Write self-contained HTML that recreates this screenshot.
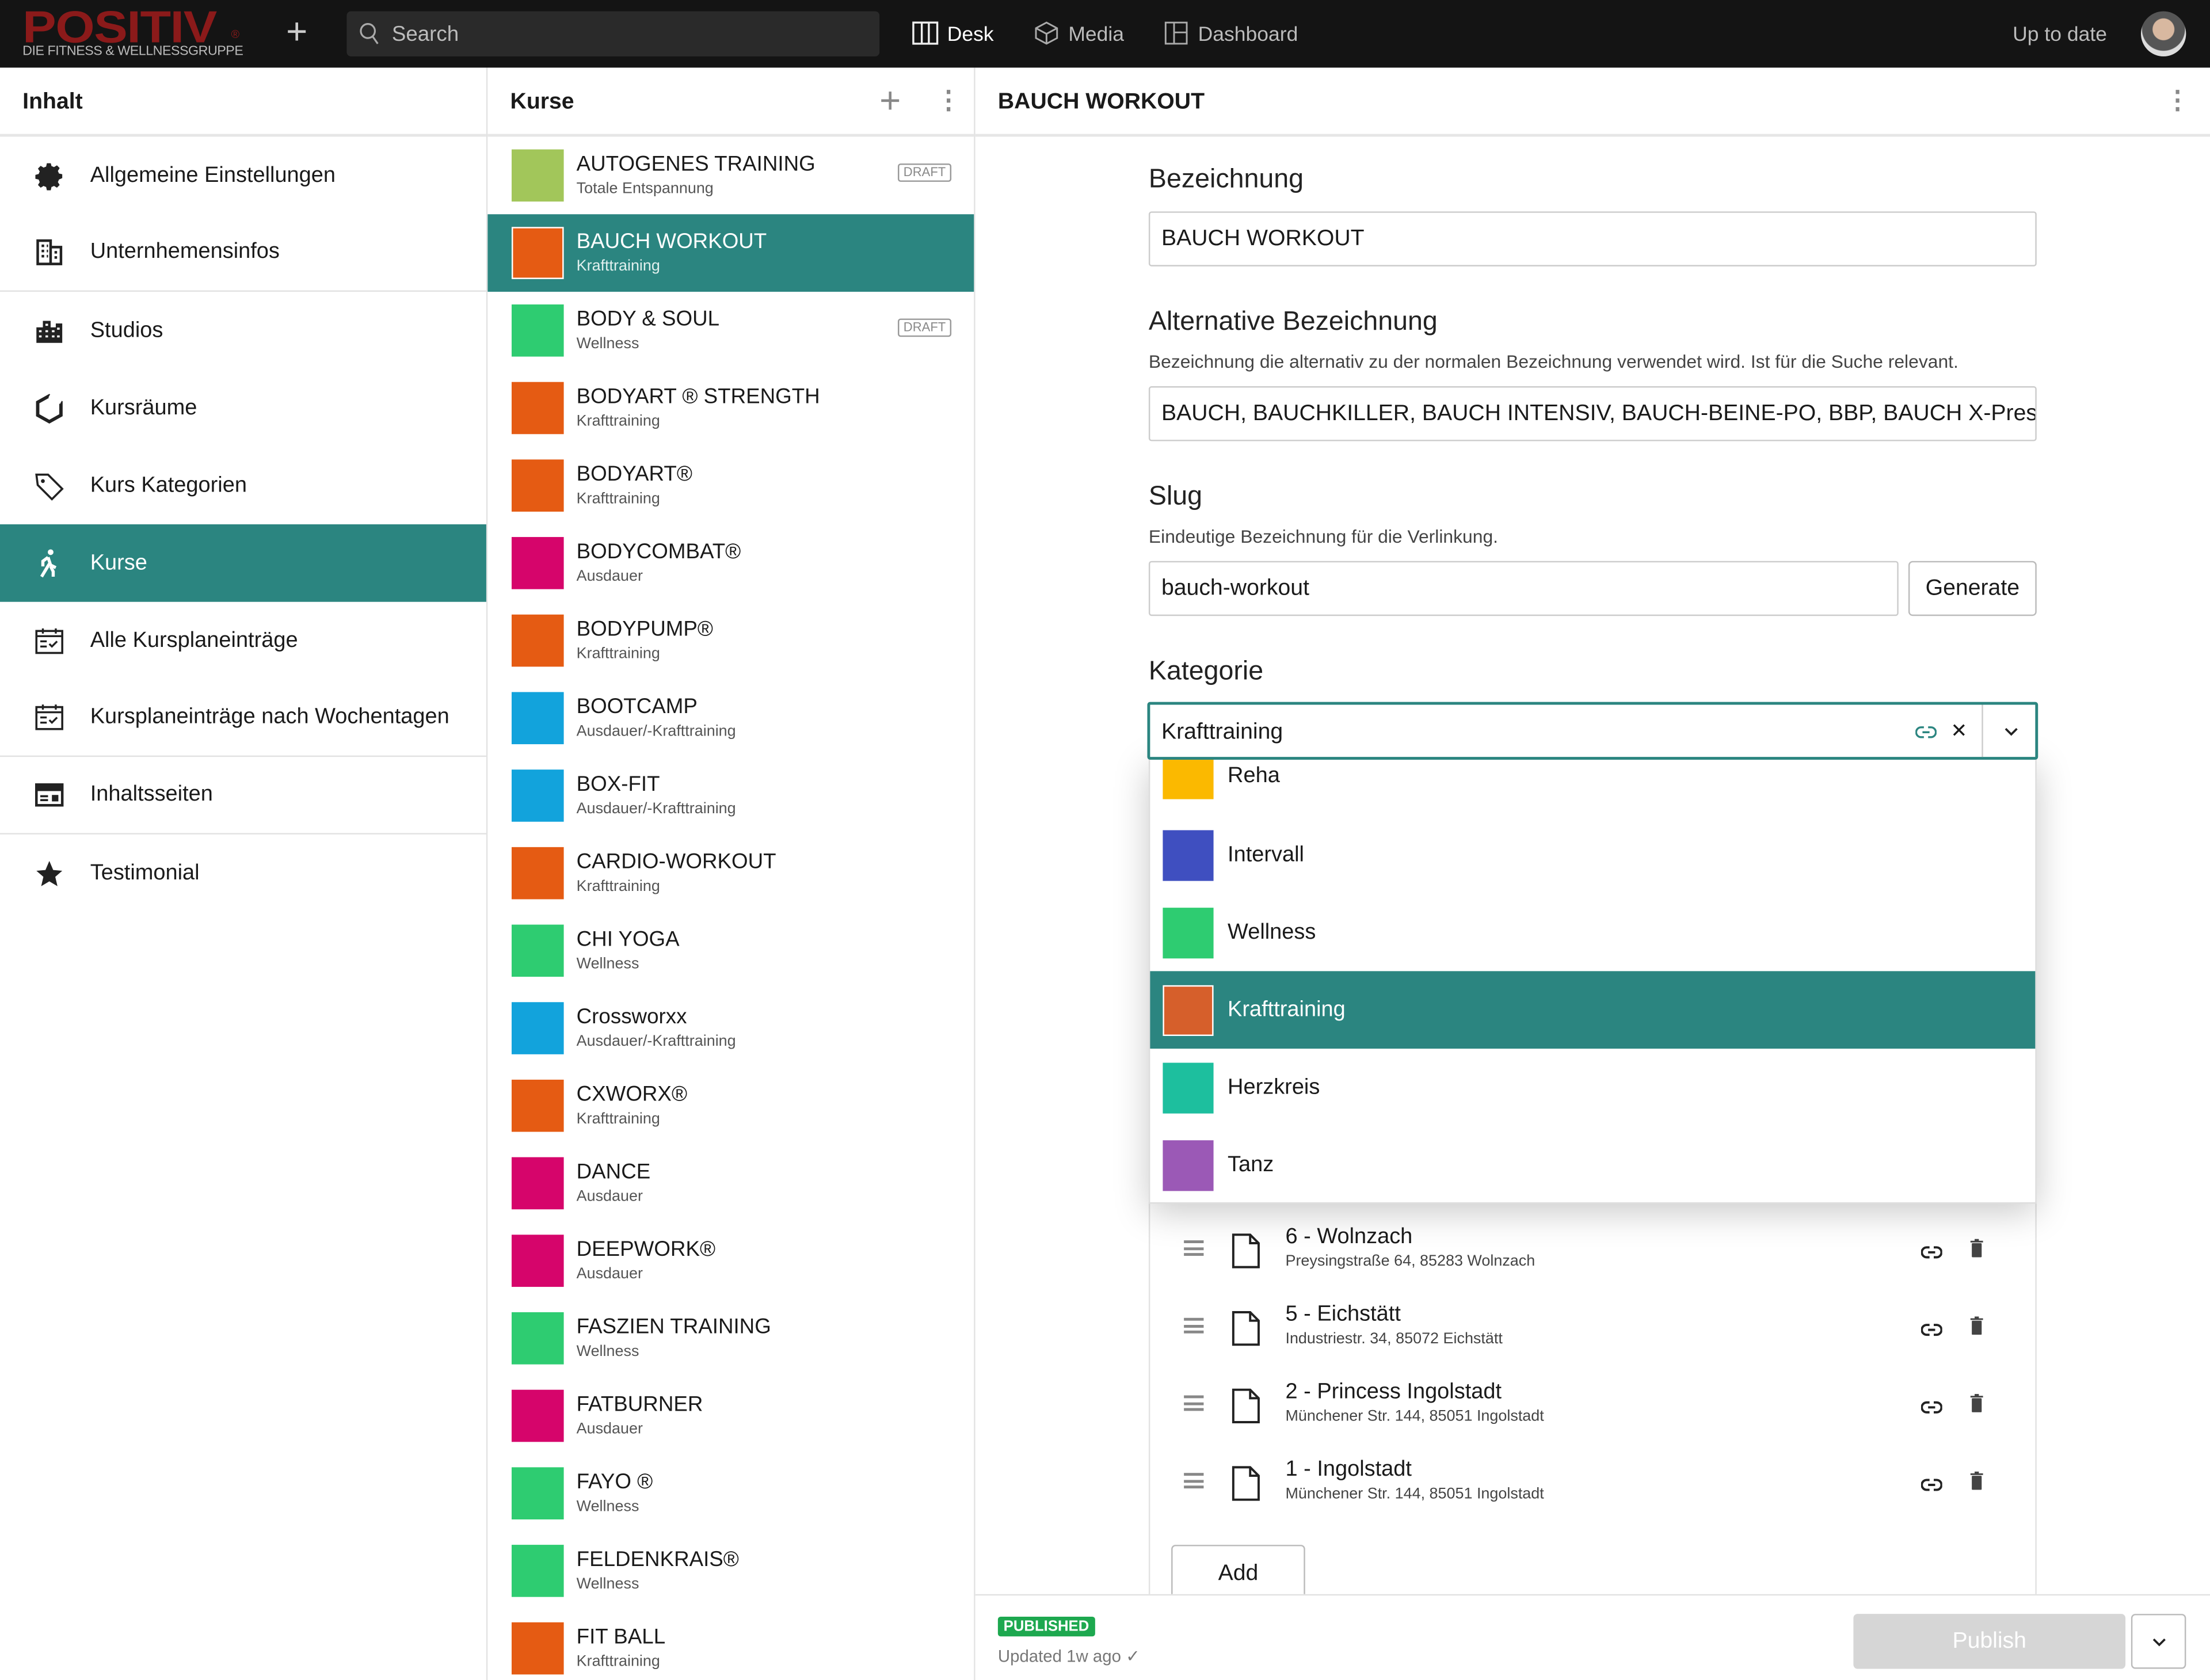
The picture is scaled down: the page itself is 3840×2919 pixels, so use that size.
<!DOCTYPE html>
<html><head><meta charset="utf-8">
<style>
*{box-sizing:border-box;margin:0;padding:0}
html,body{width:3840px;height:2919px;overflow:hidden;background:#fff}
#w{width:1568px;height:1192px;transform:scale(2.44898);transform-origin:0 0;position:relative;font-family:"Liberation Sans",sans-serif;color:#1a1a1a;overflow:hidden}
.top{position:absolute;left:0;top:0;width:1568px;height:48px;background:#141414;color:#ccc}
.abs{position:absolute}
.col{position:absolute;top:48px;bottom:0;border-right:1px solid #e2e2e2;background:#fff}
.hdr{height:49px;border-bottom:2px solid #e6e6e6;font-weight:bold;font-size:16px;padding:16px 16px;color:#1a1a1a}
.li{height:55px;display:flex;align-items:center;padding-left:24px;font-size:15.5px;position:relative}
.li svg{width:22px;height:22px;margin-right:18px}
.sep{border-bottom:1px solid #e2e2e2}
.sel{background:#2b8580;color:#fff}
.ci{height:55px;display:flex;align-items:center;padding-left:17px;position:relative}
.sw{width:37px;height:37px;margin-right:9px}
.ci .t{font-size:15px;line-height:18px}
.ci .s{font-size:11px;color:#555;line-height:16px}
.sel .s{color:#e0f0ee}
.dr{position:absolute;right:16px;top:19px;font-size:9px;color:#888;border:1px solid #999;border-radius:2px;padding:0 3px;line-height:11px}
.lbl{position:absolute;left:815px;font-size:19px;color:#222}
.inp{position:absolute;left:815px;width:630px;height:39px;border:1px solid #ccc;border-radius:2px;font-size:16px;padding:10px 8px;white-space:nowrap;overflow:hidden}
.help{position:absolute;left:815px;font-size:13px;color:#444}
.opt{height:55px;display:flex;align-items:center;padding-left:9px;font-size:15.5px}
.opt .sw{width:36px;height:36px;margin-right:10px}
.loc{position:absolute;left:830px;width:600px;height:55px}
</style></head><body><div id="w">
<div class="top">
 <div class="abs" style="left:16px;top:2px;font-size:32px;font-weight:bold;color:#8b1a1a;letter-spacing:-0.5px;transform:scaleX(1.12);transform-origin:0 0;line-height:34px">POSITIV</div>
 <div class="abs" style="left:164px;top:20px;font-size:8px;color:#8b1a1a">®</div>
 <div class="abs" style="left:16px;top:31px;font-size:9.5px;color:#bbb;letter-spacing:-0.2px">DIE FITNESS &amp; WELLNESSGRUPPE</div>
 <div class="abs" style="left:203px;top:7px;font-size:26px;font-weight:200;color:#ccc">+</div>
 <div class="abs" style="left:246px;top:8px;width:378px;height:32px;background:#2a2a2a;border-radius:3px"></div>
 <svg class="abs" style="left:255px;top:16px" width="15" height="16" viewBox="0 0 15 16"><circle cx="6" cy="6" r="5" fill="none" stroke="#aaa" stroke-width="1.3"/><line x1="9.5" y1="10" x2="13" y2="15" stroke="#aaa" stroke-width="1.3"/></svg>
 <div class="abs" style="left:278px;top:16px;font-size:15px;color:#bbb">Search</div>
 <svg class="abs" style="left:647px;top:15px" width="19" height="17"><rect x="1" y="1" width="17" height="15" fill="none" stroke="#eee" stroke-width="1.4"/><line x1="7" y1="1" x2="7" y2="16" stroke="#eee" stroke-width="1.4"/><line x1="12" y1="1" x2="12" y2="16" stroke="#eee" stroke-width="1.4"/></svg>
 <div class="abs" style="left:672px;top:17px;font-size:14.5px;color:#fff">Desk</div>
 <svg class="abs" style="left:734px;top:15px" width="17" height="17" viewBox="0 0 17 17"><path d="M8.5 1L16 5v7l-7.5 4L1 12V5z M1 5l7.5 4L16 5 M8.5 9v7" fill="none" stroke="#aaa" stroke-width="1.2"/></svg>
 <div class="abs" style="left:758px;top:17px;font-size:14.5px;color:#bbb">Media</div>
 <svg class="abs" style="left:826px;top:15px" width="17" height="17"><rect x="1" y="1" width="15" height="15" fill="none" stroke="#aaa" stroke-width="1.2"/><line x1="7" y1="1" x2="7" y2="16" stroke="#aaa" stroke-width="1.2"/><line x1="7" y1="8" x2="16" y2="8" stroke="#aaa" stroke-width="1.2"/></svg>
 <div class="abs" style="left:850px;top:17px;font-size:14.5px;color:#bbb">Dashboard</div>
 <div class="abs" style="left:1428px;top:17px;font-size:14.5px;color:#bbb">Up to date</div>
 <div class="abs" style="left:1519px;top:8px;width:32px;height:32px;border-radius:50%;background:radial-gradient(circle at 50% 40%,#d8b8a0 0 30%,#555 32% 60%,#ddd 62%)"></div>
</div>

<div class="col" style="left:0;width:346px">
 <div class="hdr">Inhalt</div>
 <div class="li"><svg viewBox="0 0 24 24"><path d="M12 8a4 4 0 100 8 4 4 0 000-8zm9 5.5v-3l-2.6-.6a7 7 0 00-.8-1.9l1.4-2.3-2.1-2.1-2.3 1.4a7 7 0 00-1.9-.8L12.1 2h-3l-.6 2.6a7 7 0 00-1.9.8L4.3 4 2.2 6.1l1.4 2.3a7 7 0 00-.8 1.9L.2 11v3l2.6.6c.2.7.4 1.3.8 1.9l-1.4 2.3 2.1 2.1 2.3-1.4c.6.4 1.200.6 1.9.8l.6 2.6h3l.6-2.6c.7-.2 1.3-.4 1.9-.8l2.3 1.4 2.1-2.1-1.4-2.3c.4-.6.6-1.2.8-1.9z" fill="#222" transform="translate(1 0)"/></svg>Allgemeine Einstellungen</div>
 <div class="li sep"><svg viewBox="0 0 24 24"><path d="M3 3h10v18H3zM13 8h8v13h-8" fill="none" stroke="#222" stroke-width="2"/><path d="M6 7h2M10 7h1M6 11h2M10 11h1M6 15h2M10 15h1M16 12h2M16 16h2" stroke="#222" stroke-width="2"/></svg>Unternhemensinfos</div>
 <div class="li"><svg viewBox="0 0 24 24"><path d="M2 21V9h5V4h6v5h4v-3h5v15z" fill="#222"/><path d="M9 7h2M4 12h2M9 12h2M4 16h2M9 16h2M14 12h2M18 10h2M14 16h2M18 16h2" stroke="#fff" stroke-width="1.6"/></svg>Studios</div>
 <div class="li"><svg viewBox="0 0 24 24"><path d="M12 2l9 5v10l-9 5-9-5V7z" fill="none" stroke="#222" stroke-width="2.6"/><path d="M12 2l9 5" stroke="#fff" stroke-width="3"/></svg>Kursräume</div>
 <div class="li"><svg viewBox="0 0 24 24"><path d="M2 3h9l11 11-8 8L3 11z" fill="none" stroke="#222" stroke-width="1.6"/><circle cx="7" cy="8" r="1.5" fill="#222"/></svg>Kurs Kategorien</div>
 <div class="li sel"><svg viewBox="0 0 24 24"><circle cx="13" cy="3" r="2.2" fill="#fff"/><path d="M11 7l-4 3v4M11 7l2 6 4 2M12 12l-3 5-3 5M13 14l2 4 0 4" fill="none" stroke="#fff" stroke-width="2.4"/></svg>Kurse</div>
 <div class="li"><svg viewBox="0 0 24 24"><rect x="2" y="4" width="20" height="17" fill="none" stroke="#222" stroke-width="1.6"/><path d="M2 8h20M7 2v4M17 2v4M5 12h5M5 16h5M12 14l2 2 4-4" fill="none" stroke="#222" stroke-width="1.5"/></svg>Alle Kursplaneinträge</div>
 <div class="li sep"><svg viewBox="0 0 24 24"><rect x="2" y="4" width="20" height="17" fill="none" stroke="#222" stroke-width="1.6"/><path d="M2 8h20M7 2v4M17 2v4M5 12h5M5 16h5M12 14l2 2 4-4" fill="none" stroke="#222" stroke-width="1.5"/></svg>Kursplaneinträge nach Wochentagen</div>
 <div class="li sep"><svg viewBox="0 0 24 24"><rect x="2" y="4" width="20" height="16" fill="none" stroke="#222" stroke-width="2"/><rect x="2" y="4" width="20" height="5" fill="#222"/><path d="M5 13h6M5 16h6" stroke="#222" stroke-width="1.6"/><rect x="14" y="12" width="5" height="5" fill="#222"/></svg>Inhaltsseiten</div>
 <div class="li"><svg viewBox="0 0 24 24"><path d="M12 2l3 7 7 .6-5.4 4.7 1.7 7.2L12 17.8 5.7 21.5l1.7-7.2L2 9.6 9 9z" fill="#222"/></svg>Testimonial</div>
</div>

<div class="col" style="left:346px;width:346px">
 <div class="hdr">Kurse<span class="abs" style="left:278px;top:8px;font-size:26px;font-weight:200;color:#888">+</span><span class="abs" style="left:318px;top:13px;font-size:18px;color:#888;font-weight:bold">⋮</span></div>
 <div class="ci"><div class="sw" style="background:#a2c65a"></div><div><div class="t">AUTOGENES TRAINING</div><div class="s">Totale Entspannung</div></div><span class="dr">DRAFT</span></div>
 <div class="ci sel"><div class="sw" style="background:#e55b13;border:1px solid #fff"></div><div><div class="t">BAUCH WORKOUT</div><div class="s">Krafttraining</div></div></div>
 <div class="ci"><div class="sw" style="background:#2ecc71"></div><div><div class="t">BODY &amp; SOUL</div><div class="s">Wellness</div></div><span class="dr">DRAFT</span></div>
 <div class="ci"><div class="sw" style="background:#e55b13"></div><div><div class="t">BODYART ® STRENGTH</div><div class="s">Krafttraining</div></div></div>
 <div class="ci"><div class="sw" style="background:#e55b13"></div><div><div class="t">BODYART®</div><div class="s">Krafttraining</div></div></div>
 <div class="ci"><div class="sw" style="background:#d6056b"></div><div><div class="t">BODYCOMBAT®</div><div class="s">Ausdauer</div></div></div>
 <div class="ci"><div class="sw" style="background:#e55b13"></div><div><div class="t">BODYPUMP®</div><div class="s">Krafttraining</div></div></div>
 <div class="ci"><div class="sw" style="background:#12a3dc"></div><div><div class="t">BOOTCAMP</div><div class="s">Ausdauer/-Krafttraining</div></div></div>
 <div class="ci"><div class="sw" style="background:#12a3dc"></div><div><div class="t">BOX-FIT</div><div class="s">Ausdauer/-Krafttraining</div></div></div>
 <div class="ci"><div class="sw" style="background:#e55b13"></div><div><div class="t">CARDIO-WORKOUT</div><div class="s">Krafttraining</div></div></div>
 <div class="ci"><div class="sw" style="background:#2ecc71"></div><div><div class="t">CHI YOGA</div><div class="s">Wellness</div></div></div>
 <div class="ci"><div class="sw" style="background:#12a3dc"></div><div><div class="t">Crossworxx</div><div class="s">Ausdauer/-Krafttraining</div></div></div>
 <div class="ci"><div class="sw" style="background:#e55b13"></div><div><div class="t">CXWORX®</div><div class="s">Krafttraining</div></div></div>
 <div class="ci"><div class="sw" style="background:#d6056b"></div><div><div class="t">DANCE</div><div class="s">Ausdauer</div></div></div>
 <div class="ci"><div class="sw" style="background:#d6056b"></div><div><div class="t">DEEPWORK®</div><div class="s">Ausdauer</div></div></div>
 <div class="ci"><div class="sw" style="background:#2ecc71"></div><div><div class="t">FASZIEN TRAINING</div><div class="s">Wellness</div></div></div>
 <div class="ci"><div class="sw" style="background:#d6056b"></div><div><div class="t">FATBURNER</div><div class="s">Ausdauer</div></div></div>
 <div class="ci"><div class="sw" style="background:#2ecc71"></div><div><div class="t">FAYO ®</div><div class="s">Wellness</div></div></div>
 <div class="ci"><div class="sw" style="background:#2ecc71"></div><div><div class="t">FELDENKRAIS®</div><div class="s">Wellness</div></div></div>
 <div class="ci"><div class="sw" style="background:#e55b13"></div><div><div class="t">FIT BALL</div><div class="s">Krafttraining</div></div></div>
</div>

<div class="col" style="left:692px;width:876px;border-right:none">
 <div class="hdr">BAUCH WORKOUT<span class="abs" style="left:844px;top:13px;font-size:18px;color:#888">⋮</span></div>
</div>

<div class="lbl" style="top:117px">Bezeichnung</div>
<div class="inp" style="top:150px">BAUCH WORKOUT</div>
<div class="lbl" style="top:218px">Alternative Bezeichnung</div>
<div class="help" style="top:249px">Bezeichnung die alternativ zu der normalen Bezeichnung verwendet wird. Ist für die Suche relevant.</div>
<div class="inp" style="top:274px">BAUCH, BAUCHKILLER, BAUCH INTENSIV, BAUCH-BEINE-PO, BBP, BAUCH X-Press</div>
<div class="lbl" style="top:342px">Slug</div>
<div class="help" style="top:373px">Eindeutige Bezeichnung für die Verlinkung.</div>
<div class="inp" style="top:398px;width:532px">bauch-workout</div>
<div class="abs" style="left:1354px;top:398px;width:91px;height:39px;border:1px solid #bbb;border-radius:3px;font-size:16px;text-align:center;line-height:38px">Generate</div>
<div class="lbl" style="top:466px">Kategorie</div>

<div class="abs" style="left:815px;top:498px;width:630px;height:356px;border-left:1px solid #e2e2e2;border-right:1px solid #e2e2e2"></div>
<div class="abs" style="left:815px;top:853px;width:630px;height:280px;border-left:1px solid #e2e2e2;border-right:1px solid #e2e2e2"></div>

<div class="loc" style="top:860px"><div class="abs" style="left:10px;top:20px;width:14px;height:11px;border-top:2px solid #888;border-bottom:2px solid #888"></div><div class="abs" style="left:10px;top:25px;width:14px;height:2px;background:#888"></div><svg class="abs" style="left:44px;top:15px" width="20" height="25"><path d="M1 1h12l6 6v17H1z M13 1v6h6" fill="none" stroke="#222" stroke-width="1.6"/></svg><div class="abs" style="left:82px;top:9px;font-size:15.5px">6 - Wolnzach</div><div class="abs" style="left:82px;top:29px;font-size:11px;color:#444">Preysingstraße 64, 85283 Wolnzach</div><svg class="abs" style="left:533px;top:24px" width="15" height="9" viewBox="0 0 15 9"><path d="M6 1H4a3.5 3.5 0 000 7h2M9 1h2a3.5 3.5 0 010 7H9M5 4.5h5" fill="none" stroke="#222" stroke-width="1.6"/></svg><svg class="abs" style="left:568px;top:19px" width="9" height="13"><rect x="0" y="1.3" width="9" height="1.2" fill="#444"/><rect x="3" y="0" width="3" height="1.5" fill="#444"/><rect x="1" y="3" width="7" height="10" rx="0.6" fill="#444"/></svg></div>
<div class="loc" style="top:915px"><div class="abs" style="left:10px;top:20px;width:14px;height:11px;border-top:2px solid #888;border-bottom:2px solid #888"></div><div class="abs" style="left:10px;top:25px;width:14px;height:2px;background:#888"></div><svg class="abs" style="left:44px;top:15px" width="20" height="25"><path d="M1 1h12l6 6v17H1z M13 1v6h6" fill="none" stroke="#222" stroke-width="1.6"/></svg><div class="abs" style="left:82px;top:9px;font-size:15.5px">5 - Eichstätt</div><div class="abs" style="left:82px;top:29px;font-size:11px;color:#444">Industriestr. 34, 85072 Eichstätt</div><svg class="abs" style="left:533px;top:24px" width="15" height="9" viewBox="0 0 15 9"><path d="M6 1H4a3.5 3.5 0 000 7h2M9 1h2a3.5 3.5 0 010 7H9M5 4.5h5" fill="none" stroke="#222" stroke-width="1.6"/></svg><svg class="abs" style="left:568px;top:19px" width="9" height="13"><rect x="0" y="1.3" width="9" height="1.2" fill="#444"/><rect x="3" y="0" width="3" height="1.5" fill="#444"/><rect x="1" y="3" width="7" height="10" rx="0.6" fill="#444"/></svg></div>
<div class="loc" style="top:970px"><div class="abs" style="left:10px;top:20px;width:14px;height:11px;border-top:2px solid #888;border-bottom:2px solid #888"></div><div class="abs" style="left:10px;top:25px;width:14px;height:2px;background:#888"></div><svg class="abs" style="left:44px;top:15px" width="20" height="25"><path d="M1 1h12l6 6v17H1z M13 1v6h6" fill="none" stroke="#222" stroke-width="1.6"/></svg><div class="abs" style="left:82px;top:9px;font-size:15.5px">2 - Princess Ingolstadt</div><div class="abs" style="left:82px;top:29px;font-size:11px;color:#444">Münchener Str. 144, 85051 Ingolstadt</div><svg class="abs" style="left:533px;top:24px" width="15" height="9" viewBox="0 0 15 9"><path d="M6 1H4a3.5 3.5 0 000 7h2M9 1h2a3.5 3.5 0 010 7H9M5 4.5h5" fill="none" stroke="#222" stroke-width="1.6"/></svg><svg class="abs" style="left:568px;top:19px" width="9" height="13"><rect x="0" y="1.3" width="9" height="1.2" fill="#444"/><rect x="3" y="0" width="3" height="1.5" fill="#444"/><rect x="1" y="3" width="7" height="10" rx="0.6" fill="#444"/></svg></div>
<div class="loc" style="top:1025px"><div class="abs" style="left:10px;top:20px;width:14px;height:11px;border-top:2px solid #888;border-bottom:2px solid #888"></div><div class="abs" style="left:10px;top:25px;width:14px;height:2px;background:#888"></div><svg class="abs" style="left:44px;top:15px" width="20" height="25"><path d="M1 1h12l6 6v17H1z M13 1v6h6" fill="none" stroke="#222" stroke-width="1.6"/></svg><div class="abs" style="left:82px;top:9px;font-size:15.5px">1 - Ingolstadt</div><div class="abs" style="left:82px;top:29px;font-size:11px;color:#444">Münchener Str. 144, 85051 Ingolstadt</div><svg class="abs" style="left:533px;top:24px" width="15" height="9" viewBox="0 0 15 9"><path d="M6 1H4a3.5 3.5 0 000 7h2M9 1h2a3.5 3.5 0 010 7H9M5 4.5h5" fill="none" stroke="#222" stroke-width="1.6"/></svg><svg class="abs" style="left:568px;top:19px" width="9" height="13"><rect x="0" y="1.3" width="9" height="1.2" fill="#444"/><rect x="3" y="0" width="3" height="1.5" fill="#444"/><rect x="1" y="3" width="7" height="10" rx="0.6" fill="#444"/></svg></div>
<div class="abs" style="left:831px;top:1096px;width:95px;height:40px;border:1px solid #bbb;border-radius:3px;font-size:16px;text-align:center;line-height:40px">Add</div>

<div class="abs" style="left:815px;top:538px;width:630px;height:316px;background:#fff;box-shadow:0 6px 24px rgba(0,0,0,0.22);border:1px solid #ddd">
 <div class="opt" style="height:40px;align-items:flex-start"><div class="sw" style="background:#fbb900;height:28px"></div><span style="margin-top:3px">Reha</span></div>
 <div class="opt"><div class="sw" style="background:#3f4fc0"></div>Intervall</div>
 <div class="opt"><div class="sw" style="background:#2ecc71"></div>Wellness</div>
 <div class="opt sel"><div class="sw" style="background:#d65f2b;border:1px solid #fff"></div>Krafttraining</div>
 <div class="opt"><div class="sw" style="background:#1dbf9e"></div>Herzkreis</div>
 <div class="opt"><div class="sw" style="background:#9b59b6"></div>Tanz</div>
</div>
<div class="abs" style="left:814px;top:498px;width:632px;height:41px;border:2px solid #2b8580;border-radius:2px;background:#fff">
 <div class="abs" style="left:8px;top:11px;font-size:16px">Krafttraining</div>
 <svg class="abs" style="left:543px;top:15px" width="15" height="9" viewBox="0 0 15 9"><path d="M6 1H4a3.5 3.5 0 000 7h2M9 1h2a3.5 3.5 0 010 7H9M5 4.5h5" fill="none" stroke="#2b8580" stroke-width="1.4"/></svg>
 <div class="abs" style="left:568px;top:10px;font-size:14px">✕</div>
 <div class="abs" style="left:590px;top:0;width:1px;height:37px;background:#ccc"></div>
 <svg class="abs" style="left:606px;top:15px" width="10" height="8"><path d="M1 2l4 4 4-4" fill="none" stroke="#222" stroke-width="1.5"/></svg>
</div>

<div class="abs" style="left:692px;top:1131px;width:876px;height:61px;background:#fff;border-top:1px solid #e2e2e2">
 <div class="abs" style="left:16px;top:15px;background:#1da84f;color:#fff;font-size:10.5px;font-weight:bold;padding:1px 4px;border-radius:2px">PUBLISHED</div>
 <div class="abs" style="left:16px;top:36px;font-size:12px;color:#777">Updated 1w ago ✓</div>
 <div class="abs" style="left:623px;top:13px;width:193px;height:39px;background:#d6d6d6;border-radius:3px;color:#fff;font-size:16px;text-align:center;line-height:39px">Publish</div>
 <div class="abs" style="left:820px;top:13px;width:39px;height:39px;border:1px solid #bbb;border-radius:3px"><svg class="abs" style="left:14px;top:15px" width="10" height="8"><path d="M1 2l4 4 4-4" fill="none" stroke="#222" stroke-width="1.5"/></svg></div>
</div>
</div></body></html>
